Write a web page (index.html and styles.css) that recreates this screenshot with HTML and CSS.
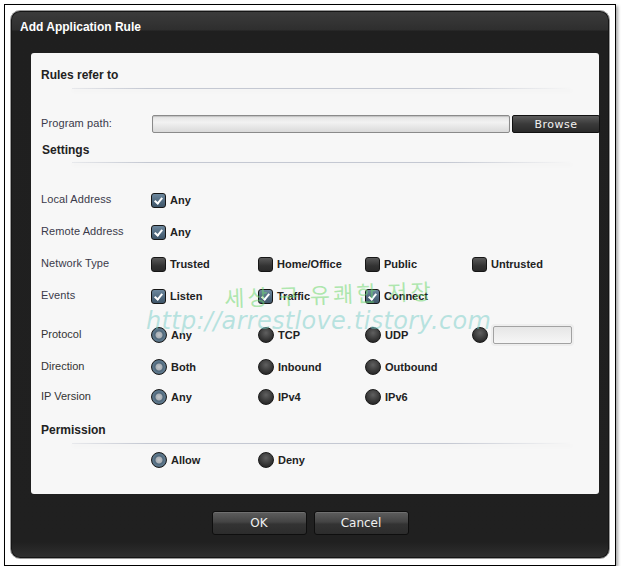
FILE: index.html
```html
<!DOCTYPE html>
<html lang="en">
<head>
    <meta charset="UTF-8">
    <title>Add Application Rule</title>
    <link rel="stylesheet" href="styles.css">
</head>
<body>
    <div class="frame">
        <div class="dialog">
            <div class="title">Add Application Rule</div>

            <div class="panel">
                <h2 class="heading">Rules refer to</h2>
                <div class="rule"></div>

                <div class="path-row">
                    <span class="label">Program path:</span>
                    <input type="text" class="path-input">
                    <button class="browse">Browse</button>
                </div>

                <h2 class="heading settings">Settings</h2>
                <div class="rule"></div>

                <div class="row first-row">
                    <span class="label">Local Address</span>
                    <span class="opt"><span class="check on"></span>Any</span>
                </div>
                <div class="row">
                    <span class="label">Remote Address</span>
                    <span class="opt"><span class="check on"></span>Any</span>
                </div>
                <div class="row">
                    <span class="label">Network Type</span>
                    <span class="opt"><span class="check"></span>Trusted</span>
                    <span class="opt"><span class="check"></span>Home/Office</span>
                    <span class="opt"><span class="check"></span>Public</span>
                    <span class="opt"><span class="check"></span>Untrusted</span>
                </div>
                <div class="row">
                    <span class="label">Events</span>
                    <span class="opt"><span class="check on"></span>Listen</span>
                    <span class="opt"><span class="check on"></span>Traffic</span>
                    <span class="opt"><span class="check on"></span>Connect</span>
                </div>

                <div class="row protocol">
                    <span class="label alt">Protocol</span>
                    <span class="opt"><span class="radio on"></span>Any</span>
                    <span class="opt"><span class="radio"></span>TCP</span>
                    <span class="opt"><span class="radio"></span>UDP</span>
                    <span class="opt"><span class="radio"></span><input type="text" class="port-input"></span>
                </div>
                <div class="row">
                    <span class="label alt">Direction</span>
                    <span class="opt"><span class="radio on"></span>Both</span>
                    <span class="opt"><span class="radio"></span>Inbound</span>
                    <span class="opt"><span class="radio"></span>Outbound</span>
                </div>
                <div class="row short">
                    <span class="label alt">IP Version</span>
                    <span class="opt"><span class="radio on"></span>Any</span>
                    <span class="opt"><span class="radio"></span>IPv4</span>
                    <span class="opt"><span class="radio"></span>IPv6</span>
                </div>

                <h2 class="heading permission">Permission</h2>
                <div class="rule"></div>
                <div class="row">
                    <span class="label"></span>
                    <span class="opt"><span class="radio on"></span>Allow</span>
                    <span class="opt"><span class="radio"></span>Deny</span>
                </div>

                <!-- blog watermark baked into the screenshot -->
                <div class="mark-ko">세상 구 유쾌한 저장</div>
                <div class="mark-url">http://arrestlove.tistory.com</div>
            </div>

            <div class="buttons">
                <button class="btn">OK</button>
                <button class="btn">Cancel</button>
            </div>
        </div>
    </div>
</body>
</html>
```

FILE: styles.css
```css
* {
    margin: 0;
    padding: 0;
    box-sizing: border-box;
}

body {
    background: #fff;
    font-family: 'Liberation Sans', Arial, sans-serif;
    font-size: 11px;
    color: #333;
}

/* screenshot frame */
.frame {
    width: 612px;
    height: 562px;
    margin: 4px 0 0 4px;
    padding: 5px 5px 6px 5px;
    border: 1px solid #000;
    box-shadow: 2px 2px 3px rgba(0, 0, 0, 0.35);
}

/* Dialog */
.dialog {
    width: 600px;
    height: 549px;
    border: 1px solid #9a9a9a;
    border-radius: 10px;
    box-shadow: inset 0 0 0 1px #151515;
    background: linear-gradient(to bottom,
        #3c3c3c 0,
        #2e2e2e 19px,
        #1f1f1f 20px,
        #202020 calc(100% - 16px),
        #303030 100%);
}

.title {
    height: 32px;
    line-height: 32px;
    padding-left: 9px;
    color: #fff;
    font-size: 12px;
    font-weight: bold;
}

.panel {
    position: relative;
    width: 568px;
    height: 441px;
    margin: 10px 0 0 20px;
    padding: 15px 0 0 10px;
    background: #f7f7f7;
    border-radius: 3px;
}

.heading {
    height: 14px;
    line-height: 14px;
    font-size: 12px;
    font-weight: bold;
    color: #222;
}

.heading.settings {
    margin-top: 10px;
    padding-left: 1px;
}

.heading.permission {
    margin-top: 12px;
}

.rule {
    height: 1px;
    width: 500px;
    margin: 6px 0 0 31px;
    background: linear-gradient(to right, rgba(196, 200, 210, 0.3), #c4c8d2 15%, #c4c8d2 75%, rgba(196, 200, 210, 0));
    box-shadow: 0 2px 4px rgba(0, 0, 0, 0.06);
}

.heading.settings + .rule {
    margin-top: 5px;
}

/* Program path */
.path-row {
    display: flex;
    align-items: center;
    height: 18px;
    margin-top: 26px;
}

.path-row .label {
    width: 111px;
}

.path-input {
    width: 358px;
    height: 18px;
    border: 1px solid #8a8a8a;
    border-radius: 2px;
    background: linear-gradient(#e2e2e2, #f2f2f2 40%, #dadada);
    box-shadow: inset 0 1px 1px rgba(0, 0, 0, 0.15);
}

.browse {
    width: 88px;
    height: 18px;
    margin-left: 2px;
    margin-right: -1px;
    border: 1px solid #111;
    border-radius: 2px;
    background: linear-gradient(#5c5c5c, #3a3a3a 50%, #2a2a2a);
    color: #f2f2f2;
    font-family: 'DejaVu Sans', sans-serif;
    font-size: 11px;
    letter-spacing: 0.5px;
}

/* Option rows */
.row {
    display: grid;
    grid-template-columns: 110px repeat(4, 107px);
    align-items: center;
    height: 32px;
}

.row.first-row {
    margin-top: 21px;
}

.row.protocol {
    margin-top: 7px;
}

.row.short {
    height: 28px;
}

.label {
    color: #3a3a4a;
    font-size: 11px;
    letter-spacing: 0.1px;
    padding-bottom: 3px;
}

.label.alt {
    color: #333;
    letter-spacing: 0;
}

.opt {
    display: flex;
    align-items: center;
    gap: 4px;
    font-weight: bold;
    color: #222;
}

.check {
    position: relative;
    width: 15px;
    height: 15px;
    border: 1px solid #161616;
    border-radius: 3px;
    background: linear-gradient(#5a5a5a, #333 60%, #2a2a2a);
}

.check.on {
    background: linear-gradient(#6d889e, #4f687d 60%, #3f5669);
}

.check.on::after {
    content: '';
    position: absolute;
    left: 4px;
    top: 2px;
    width: 3px;
    height: 6px;
    border: solid #fff;
    border-width: 0 2px 2px 0;
    transform: rotate(40deg);
}

.radio {
    width: 16px;
    height: 16px;
    border: 1px solid #1a1a1a;
    border-radius: 50%;
    background: radial-gradient(circle at 50% 35%, #606060, #2e2e2e 70%, #222);
}

.radio.on {
    background: radial-gradient(circle, #c2c6ca 0, #a9afb5 3px, #4e6679 4px, #5f7a8e 6px, #3d5466 8px);
}

.port-input {
    width: 79px;
    height: 18px;
    margin-left: 1px;
    border: 1px solid #a2a2a2;
    border-radius: 2px;
    background: linear-gradient(#e6e6e6, #f6f6f6);
    box-shadow: 0 0 0 2px #eeeeee;
}

/* watermark */
.mark-ko {
    position: absolute;
    left: 193px;
    top: 224px;
    font-family: 'Noto Sans CJK KR', sans-serif;
    font-size: 22px;
    letter-spacing: 3px;
    color: rgba(110, 215, 110, 0.55);
    transform: rotate(-2deg);
    pointer-events: none;
}

.mark-url {
    position: absolute;
    left: 115px;
    top: 254px;
    font-family: 'DejaVu Sans', sans-serif;
    font-style: italic;
    font-size: 24px;
    letter-spacing: 0.3px;
    color: rgba(120, 205, 200, 0.5);
    pointer-events: none;
}

/* Footer buttons */
.buttons {
    display: flex;
    justify-content: center;
    gap: 7px;
    margin-top: 17px;
}

.btn {
    width: 95px;
    height: 24px;
    border: 1px solid #0e0e0e;
    border-radius: 3px;
    background: linear-gradient(#5e5e5e, #444 45%, #333 55%, #2c2c2c);
    box-shadow: inset 0 1px 0 rgba(255, 255, 255, 0.12);
    color: #f0f0f0;
    font-family: 'DejaVu Sans', sans-serif;
    font-size: 12px;
}
```
